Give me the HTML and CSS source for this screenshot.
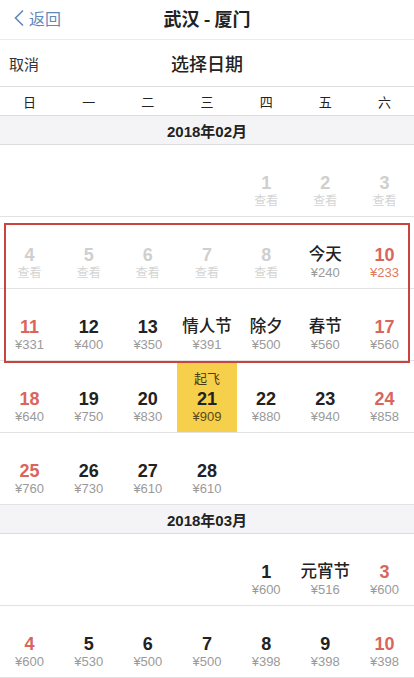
FILE: index.html
```html
<!DOCTYPE html>
<html lang="zh">
<head>
<meta charset="utf-8">
<link rel="stylesheet" href="styles.css">
</head>
<body>
<div class="nav">
  <div class="back">
    <svg class="chev" width="12" height="18" viewBox="0 0 12 18"><path d="M10 1.5 L2.5 9 L10 16.5" fill="none" stroke="#5f89bb" stroke-width="1.6"/></svg>
    <span>返回</span>
  </div>
  <div class="title">武汉 - 厦门</div>
  <div></div>
</div>
<div class="sub">
  <div class="cancel">取消</div>
  <div class="subtitle">选择日期</div>
  <div></div>
</div>
<div class="weekdays">
  <div>日</div><div>一</div><div>二</div><div>三</div><div>四</div><div>五</div><div>六</div>
</div>

<div class="month">2018年02月</div>
<div class="row">
  <div class="cell"></div><div class="cell"></div><div class="cell"></div><div class="cell"></div>
  <div class="cell off"><div class="num">1</div><div class="price">查看</div></div>
  <div class="cell off"><div class="num">2</div><div class="price">查看</div></div>
  <div class="cell off"><div class="num">3</div><div class="price">查看</div></div>
</div>
<div class="hl">
  <div class="row">
    <div class="cell off"><div class="num">4</div><div class="price">查看</div></div>
    <div class="cell off"><div class="num">5</div><div class="price">查看</div></div>
    <div class="cell off"><div class="num">6</div><div class="price">查看</div></div>
    <div class="cell off"><div class="num">7</div><div class="price">查看</div></div>
    <div class="cell off"><div class="num">8</div><div class="price">查看</div></div>
    <div class="cell"><div class="num cn">今天</div><div class="price">¥240</div></div>
    <div class="cell red"><div class="num">10</div><div class="price low">¥233</div></div>
  </div>
  <div class="row">
    <div class="cell red"><div class="num">11</div><div class="price">¥331</div></div>
    <div class="cell"><div class="num">12</div><div class="price">¥400</div></div>
    <div class="cell"><div class="num">13</div><div class="price">¥350</div></div>
    <div class="cell"><div class="num cn">情人节</div><div class="price">¥391</div></div>
    <div class="cell"><div class="num cn">除夕</div><div class="price">¥500</div></div>
    <div class="cell"><div class="num cn">春节</div><div class="price">¥560</div></div>
    <div class="cell red"><div class="num">17</div><div class="price">¥560</div></div>
  </div>
</div>
<div class="row">
  <div class="cell red"><div class="num">18</div><div class="price">¥640</div></div>
  <div class="cell"><div class="num">19</div><div class="price">¥750</div></div>
  <div class="cell"><div class="num">20</div><div class="price">¥830</div></div>
  <div class="cell sel"><div class="tag">起飞</div><div class="num">21</div><div class="price">¥909</div></div>
  <div class="cell"><div class="num">22</div><div class="price">¥880</div></div>
  <div class="cell"><div class="num">23</div><div class="price">¥940</div></div>
  <div class="cell red"><div class="num">24</div><div class="price">¥858</div></div>
</div>
<div class="row">
  <div class="cell red"><div class="num">25</div><div class="price">¥760</div></div>
  <div class="cell"><div class="num">26</div><div class="price">¥730</div></div>
  <div class="cell"><div class="num">27</div><div class="price">¥610</div></div>
  <div class="cell"><div class="num">28</div><div class="price">¥610</div></div>
  <div class="cell"></div><div class="cell"></div><div class="cell"></div>
</div>

<div class="month">2018年03月</div>
<div class="row">
  <div class="cell"></div><div class="cell"></div><div class="cell"></div><div class="cell"></div>
  <div class="cell"><div class="num">1</div><div class="price">¥600</div></div>
  <div class="cell"><div class="num cn">元宵节</div><div class="price">¥516</div></div>
  <div class="cell red"><div class="num">3</div><div class="price">¥600</div></div>
</div>
<div class="row">
  <div class="cell red"><div class="num">4</div><div class="price">¥600</div></div>
  <div class="cell"><div class="num">5</div><div class="price">¥530</div></div>
  <div class="cell"><div class="num">6</div><div class="price">¥500</div></div>
  <div class="cell"><div class="num">7</div><div class="price">¥500</div></div>
  <div class="cell"><div class="num">8</div><div class="price">¥398</div></div>
  <div class="cell"><div class="num">9</div><div class="price">¥398</div></div>
  <div class="cell red"><div class="num">10</div><div class="price">¥398</div></div>
</div>
</body>
</html>
```

FILE: styles.css
```css
* { box-sizing: border-box; }
body {
  margin: 0;
  background: #fff;
  font-family: "Liberation Sans", "Noto Sans CJK SC", sans-serif;
  color: #222;
  overflow: hidden;
}
.nav, .sub {
  display: grid;
  grid-template-columns: 1fr auto 1fr;
  align-items: center;
  border-bottom: 1px solid #ececec;
}
.nav { height: 40px; padding-bottom: 4px; }
.sub { height: 47px; border-bottom-color: #dedede; }
.back {
  display: flex;
  align-items: center;
  gap: 4px;
  padding-left: 13px;
  color: #5f89bb;
  font-size: 16px;
  font-family: "Noto Sans CJK SC", sans-serif;
}
.chev { display: block; }
.title {
  font-family: "Noto Sans CJK SC", sans-serif;
  font-weight: 700;
  font-size: 18px;
}
.cancel {
  padding-left: 9px;
  font-size: 15px;
  color: #333;
  font-family: "Noto Sans CJK SC", sans-serif;
}
.subtitle {
  font-family: "Noto Sans CJK SC", sans-serif;
  font-weight: 500;
  font-size: 18px;
  color: #222;
}
.weekdays {
  display: grid;
  grid-template-columns: repeat(7, 1fr);
  height: 29px;
  align-items: center;
  text-align: center;
  font-size: 13px;
  color: #222;
  font-family: "Noto Sans CJK SC", sans-serif;
  border-bottom: 1px solid #dcdcdc;
}
.month {
  height: 29px;
  background: #f4f4f6;
  border-bottom: 1px solid #dcdcdc;
  display: flex;
  align-items: center;
  justify-content: center;
  font-weight: 700;
  font-size: 15px;
  color: #222;
}
.row {
  display: grid;
  grid-template-columns: repeat(7, 1fr);
  height: 72px;
  border-bottom: 1px solid #e2e2e2;
}
.cell {
  display: flex;
  flex-direction: column;
  align-items: center;
  justify-content: flex-end;
  padding-bottom: 7px;
}
.num {
  font-weight: 700;
  font-size: 18px;
  line-height: 20px;
  color: #222;
}
.num.cn {
  font-family: "Noto Sans CJK SC", sans-serif;
  font-weight: 500;
  font-size: 16.5px;
  line-height: 18px;
  margin-bottom: 3px;
}
.price {
  font-size: 13px;
  line-height: 16px;
  color: #9a9a9a;
  font-family: "Liberation Sans", "Noto Sans CJK SC", sans-serif;
}
.off .num { color: #cfcfcf; }
.off .price { color: #d4d4d4; font-size: 12px; }
.red .num { color: #d9665c; }
.price.low { color: #e27a5c; }
.sel { background: #f6d04a; }
.sel .price { color: #5a4a20; }
.tag {
  font-family: "Noto Sans CJK SC", sans-serif;
  font-size: 13px;
  line-height: 16px;
  color: #4a3c10;
  margin-bottom: 3px;
}
.hl { position: relative; }
.hl::after {
  content: "";
  position: absolute;
  top: 6px;
  left: 4px;
  right: 4px;
  bottom: -2px;
  border: 2.5px solid #c9433f;
  pointer-events: none;
}
```
